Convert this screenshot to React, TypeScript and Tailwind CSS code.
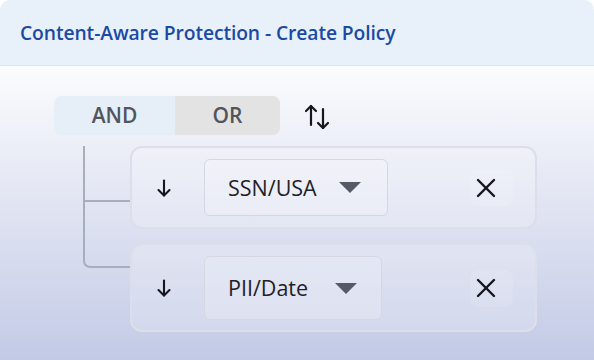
import React from 'react';

const font = { fontFamily: '"Open Sans", "Noto Sans", sans-serif' };

function DownArrow() {
  return (
    <svg width="14" height="18" viewBox="0 0 14 18" fill="none" stroke="#15171c" strokeWidth="2.1" strokeLinecap="round" strokeLinejoin="round">
      <path d="M7 1.5v15" />
      <path d="M1.5 11l5.5 5.5 5.5-5.5" />
    </svg>
  );
}

function SwapIcon() {
  return (
    <svg width="26" height="26" viewBox="0 0 26 26" fill="none" stroke="#15171c" strokeWidth="2.2" strokeLinecap="round" strokeLinejoin="round">
      <path d="M7 2v19" />
      <path d="M2 7l5-5 5 5" />
      <path d="M19 5v19" />
      <path d="M14 19l5 5 5-5" />
    </svg>
  );
}

function CloseIcon() {
  return (
    <svg width="20" height="20" viewBox="0 0 20 20" fill="none" stroke="#15171c" strokeWidth="2.4" strokeLinecap="round">
      <path d="M2 2l16 16" />
      <path d="M18 2L2 18" />
    </svg>
  );
}

function Caret() {
  return (
    <svg width="22" height="11" viewBox="0 0 22 11">
      <path d="M0 0h22L11 11z" fill="#555a66" />
    </svg>
  );
}

interface RuleProps {
  label: string;
  height: string;
  selectW: string;
  selectH: string;
  caretGap: string;
}

function RuleCard({ label, height, selectW, selectH, caretGap }: RuleProps) {
  return (
    <div className={`${height} w-[407px] rounded-[12px] border-2 border-[#dcdfe9] bg-white/20 flex items-start pt-[11px]`}>
      <div className={`w-[64px] ${selectH} flex items-center justify-center`}>
        <DownArrow />
      </div>
      <div className={`ml-[8px] ${selectW} ${selectH} rounded-[6px] border border-[#d5d8e2] bg-white/20 flex items-center justify-between pl-[23px] ${caretGap}`}>
        <span className="text-[21.5px] text-[#1f2126] leading-none">{label}</span>
        <Caret />
      </div>
      <div className={`ml-auto mr-[22px] ${selectH} flex items-center`}>
        <div className="w-[43px] h-[37px] rounded-[8px] bg-white/10 flex items-center justify-start pl-[6px]">
          <CloseIcon />
        </div>
      </div>
    </div>
  );
}

export default function App() {
  return (
    <div className="w-[594px] h-[360px] overflow-hidden bg-white" style={font}>
      <div className="h-full rounded-t-[10px] overflow-hidden flex flex-col bg-gradient-to-b from-white from-[14%] to-[#c3cae6]">
        <div className="h-[66px] shrink-0 bg-[#e8f0fa] border-b border-[#dde6f2] flex items-center px-[20px]">
          <h1 className="text-[19.3px] font-semibold text-[#1a4aa3] tracking-[-0.1px] pt-[2px]">
            Content-Aware Protection - Create Policy
          </h1>
        </div>

        <div className="pl-[54px] pt-[30px]">
          <div className="flex items-center">
            <div className="flex h-[39px] rounded-[7px] overflow-hidden text-[21px] font-semibold text-[#52555c]">
              <div className="w-[121px] bg-[#e6eef8] flex items-center justify-center">AND</div>
              <div className="w-[105px] bg-[#e3e3e4] flex items-center justify-center">OR</div>
            </div>
            <div className="ml-[24px] mt-[2px]">
              <SwapIcon />
            </div>
          </div>

          <div className="flex mt-[11px]">
            <div className="w-[76px] shrink-0">
              <svg width="76" height="130" viewBox="0 0 76 130" fill="none" stroke="#a9aebb" strokeWidth="2">
                <path d="M30 0v115a6 6 0 0 0 6 6h40" />
                <path d="M30 55h46" />
              </svg>
            </div>
            <div className="flex flex-col gap-[14px]">
              <RuleCard label="SSN/USA" height="h-[83px]" selectW="w-[184px]" selectH="h-[57px]" caretGap="pr-[26px]" />
              <RuleCard label="PII/Date" height="h-[89px]" selectW="w-[178px]" selectH="h-[64px]" caretGap="pr-[24px]" />
            </div>
          </div>
        </div>
      </div>
    </div>
  );
}
